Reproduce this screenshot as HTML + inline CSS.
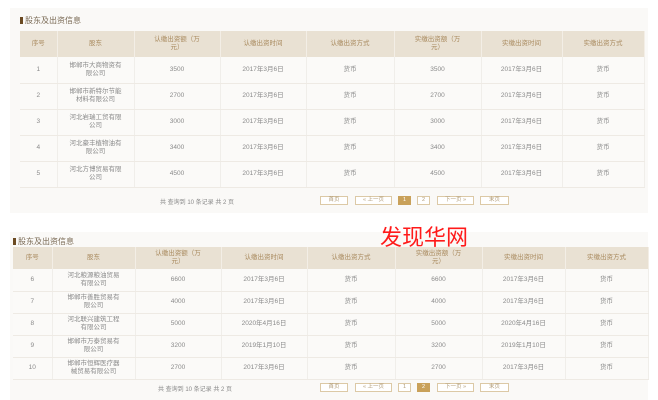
<!DOCTYPE html>
<html><head><meta charset="utf-8"><style>
*{margin:0;padding:0;box-sizing:border-box}
body{width:658px;height:400px;background:#fff;font-family:"Liberation Sans","Noto Sans CJK SC",sans-serif;position:relative;overflow:hidden;color:#8a8a8a}
.panel{position:absolute;background:#faf9f7}
.title{position:absolute;font-size:8px;color:#7a6a55}
.title:before{content:"";display:inline-block;width:3px;height:7px;background:#6b4a22;margin-right:2px;vertical-align:-1px}
table{position:absolute;border-collapse:collapse;font-size:6.5px;text-align:center;table-layout:fixed}
th{background:#e9e1d3;color:#a8895d;font-weight:normal;border-right:1px solid #f3eee6;line-height:8px}
td{border-right:1px solid #f0eeea;border-bottom:1px solid #eeeae4;line-height:8px;background:#fbfaf8}
.pg{position:absolute;font-size:6px;color:#888}
.b{position:absolute;height:9px;border:1px solid #dcc9a6;background:#fff;font-size:5.5px;color:#b09a75;text-align:center;line-height:7px}
.b.on{background:#c9a15a;color:#fff;border-color:#c9a15a}
.wm{position:absolute;left:380px;top:222px;font-size:22px;line-height:28px;color:#ff1a1a;font-family:"Noto Sans CJK SC",sans-serif;z-index:10}
</style></head><body>
<div class="panel" style="left:10px;top:8px;width:638px;height:205px"></div>
<div class="title" style="left:20px;top:15px">股东及出资信息</div>
<table style="left:20px;top:31px;width:624px">
<colgroup><col style="width:37px"><col style="width:77px"><col style="width:86px"><col style="width:86px"><col style="width:88px"><col style="width:87px"><col style="width:81px"><col style="width:82px"></colgroup>
<tr style="height:26px"><th>序号</th><th>股东</th><th>认缴出资额（万<br>元）</th><th>认缴出资时间</th><th>认缴出资方式</th><th>实缴出资额（万<br>元）</th><th>实缴出资时间</th><th>实缴出资方式</th></tr>
<tr style="height:26px"><td>1</td><td>邯郸市大商物资有<br>限公司</td><td>3500</td><td>2017年3月6日</td><td>货币</td><td>3500</td><td>2017年3月6日</td><td>货币</td></tr>
<tr style="height:26px"><td>2</td><td>邯郸市新特尔节能<br>材料有限公司</td><td>2700</td><td>2017年3月6日</td><td>货币</td><td>2700</td><td>2017年3月6日</td><td>货币</td></tr>
<tr style="height:26px"><td>3</td><td>河北岩瑞工贸有限<br>公司</td><td>3000</td><td>2017年3月6日</td><td>货币</td><td>3000</td><td>2017年3月6日</td><td>货币</td></tr>
<tr style="height:26px"><td>4</td><td>河北豪丰植物油有<br>限公司</td><td>3400</td><td>2017年3月6日</td><td>货币</td><td>3400</td><td>2017年3月6日</td><td>货币</td></tr>
<tr style="height:26px"><td>5</td><td>河北方博贸易有限<br>公司</td><td>4500</td><td>2017年3月6日</td><td>货币</td><td>4500</td><td>2017年3月6日</td><td>货币</td></tr>
</table>
<div class="pg" style="left:160px;top:197px">共 查询到 10 条记录 共 2 页</div>
<div class="b" style="left:320px;top:196px;width:28px">首页</div>
<div class="b" style="left:355px;top:196px;width:37px">« 上一页</div>
<div class="b on" style="left:398px;top:196px;width:13px">1</div>
<div class="b" style="left:417px;top:196px;width:13px">2</div>
<div class="b" style="left:437px;top:196px;width:37px">下一页 »</div>
<div class="b" style="left:480px;top:196px;width:29px">末页</div>

<div class="panel" style="left:10px;top:232px;width:638px;height:168px"></div>
<div class="title" style="left:13px;top:236px">股东及出资信息</div>
<table style="left:13px;top:247px;width:635px">
<colgroup><col style="width:39px"><col style="width:83px"><col style="width:86px"><col style="width:86px"><col style="width:88px"><col style="width:87px"><col style="width:83px"><col style="width:83px"></colgroup>
<tr style="height:22px"><th>序号</th><th>股东</th><th>认缴出资额（万<br>元）</th><th>认缴出资时间</th><th>认缴出资方式</th><th>实缴出资额（万<br>元）</th><th>实缴出资时间</th><th>实缴出资方式</th></tr>
<tr style="height:22px"><td>6</td><td>河北粮源粮油贸易<br>有限公司</td><td>6600</td><td>2017年3月6日</td><td>货币</td><td>6600</td><td>2017年3月6日</td><td>货币</td></tr>
<tr style="height:22px"><td>7</td><td>邯郸市善胜贸易有<br>限公司</td><td>4000</td><td>2017年3月6日</td><td>货币</td><td>4000</td><td>2017年3月6日</td><td>货币</td></tr>
<tr style="height:22px"><td>8</td><td>河北联兴建筑工程<br>有限公司</td><td>5000</td><td>2020年4月16日</td><td>货币</td><td>5000</td><td>2020年4月16日</td><td>货币</td></tr>
<tr style="height:22px"><td>9</td><td>邯郸市万泰贸易有<br>限公司</td><td>3200</td><td>2019年1月10日</td><td>货币</td><td>3200</td><td>2019年1月10日</td><td>货币</td></tr>
<tr style="height:22px"><td>10</td><td>邯郸市恒辉医疗器<br>械贸易有限公司</td><td>2700</td><td>2017年3月6日</td><td>货币</td><td>2700</td><td>2017年3月6日</td><td>货币</td></tr>
</table>
<div class="pg" style="left:158px;top:384px">共 查询到 10 条记录 共 2 页</div>
<div class="b" style="left:320px;top:383px;width:28px">首页</div>
<div class="b" style="left:355px;top:383px;width:37px">« 上一页</div>
<div class="b" style="left:398px;top:383px;width:13px">1</div>
<div class="b on" style="left:417px;top:383px;width:13px">2</div>
<div class="b" style="left:437px;top:383px;width:37px">下一页 »</div>
<div class="b" style="left:480px;top:383px;width:29px">末页</div>

<div class="wm">发现华网</div>
</body></html>
